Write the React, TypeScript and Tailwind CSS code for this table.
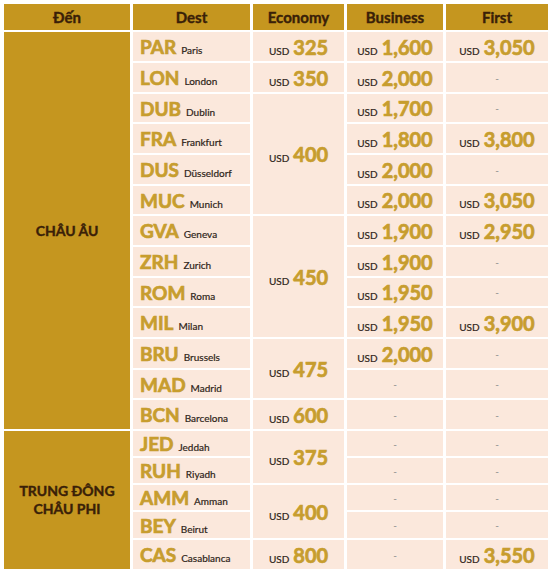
import React from "react";

type Price = string | null;

const rows: { code: string; city: string; biz: Price; first: Price }[] = [
  { code: "PAR", city: "Paris", biz: "1,600", first: "3,050" },
  { code: "LON", city: "London", biz: "2,000", first: null },
  { code: "DUB", city: "Dublin", biz: "1,700", first: null },
  { code: "FRA", city: "Frankfurt", biz: "1,800", first: "3,800" },
  { code: "DUS", city: "Düsseldorf", biz: "2,000", first: null },
  { code: "MUC", city: "Munich", biz: "2,000", first: "3,050" },
  { code: "GVA", city: "Geneva", biz: "1,900", first: "2,950" },
  { code: "ZRH", city: "Zurich", biz: "1,900", first: null },
  { code: "ROM", city: "Roma", biz: "1,950", first: null },
  { code: "MIL", city: "Milan", biz: "1,950", first: "3,900" },
  { code: "BRU", city: "Brussels", biz: "2,000", first: null },
  { code: "MAD", city: "Madrid", biz: null, first: null },
  { code: "BCN", city: "Barcelona", biz: null, first: null },
  { code: "JED", city: "Jeddah", biz: null, first: null },
  { code: "RUH", city: "Riyadh", biz: null, first: null },
  { code: "AMM", city: "Amman", biz: null, first: null },
  { code: "BEY", city: "Beirut", biz: null, first: null },
  { code: "CAS", city: "Casablanca", biz: null, first: "3,550" },
];

// economy: start row index -> [span, price]
const economy: Record<number, [number, string]> = {
  0: [1, "325"],
  1: [1, "350"],
  2: [4, "400"],
  6: [4, "450"],
  10: [2, "475"],
  12: [1, "600"],
  13: [2, "375"],
  15: [2, "400"],
  17: [1, "800"],
};

const spanClass: Record<number, string> = {
  1: "",
  2: "row-span-2",
  4: "row-span-4",
  5: "row-span-5",
  13: "row-span-13",
};

const font = { fontFamily: "Lato, 'Open Sans', sans-serif" };

function PriceCell({ value, span = 1 }: { value: Price; span?: number }) {
  return (
    <div className={`${spanClass[span]} bg-[#fbe8dc] flex items-center justify-center`}>
      {value ? (
        <span className="flex items-baseline gap-[4px] leading-none">
          <span className="text-[10px] text-[#2e2418] [-webkit-text-stroke:0.2px_#2e2418]">USD</span>
          <span className="text-[20px] font-bold text-[#c79d2e] [-webkit-text-stroke:0.7px_#c79d2e]">
            {value}
          </span>
        </span>
      ) : (
        <span className="text-[10px] text-[#8a8a8a] leading-none">-</span>
      )}
    </div>
  );
}

export default function App() {
  const cells: React.ReactNode[] = [];
  rows.forEach((r, i) => {
    if (i === 0) {
      cells.push(
        <div
          key="eu"
          className="row-span-13 bg-[#c5961f] flex items-center justify-center text-[14px] font-bold text-[#3a1f08] [-webkit-text-stroke:0.4px_#3a1f08]"
        >
          CHÂU ÂU
        </div>
      );
    }
    if (i === 13) {
      cells.push(
        <div
          key="me"
          className="row-span-5 bg-[#c5961f] flex items-center justify-center text-center text-[14px] font-bold leading-[18px] text-[#3a1f08] [-webkit-text-stroke:0.4px_#3a1f08]"
        >
          TRUNG ĐÔNG
          <br />
          CHÂU PHI
        </div>
      );
    }
    cells.push(
      <div key={`d${i}`} className="bg-[#fbe8dc] flex items-center pl-[7px]">
        <span className="flex items-baseline gap-[5px] leading-none">
          <span className="text-[19px] font-bold text-[#c79d2e] [-webkit-text-stroke:0.7px_#c79d2e]">
            {r.code}
          </span>
          <span className="text-[10px] text-[#2e2418] [-webkit-text-stroke:0.2px_#2e2418]">{r.city}</span>
        </span>
      </div>
    );
    const e = economy[i];
    if (e) cells.push(<PriceCell key={`e${i}`} value={e[1]} span={e[0]} />);
    cells.push(<PriceCell key={`b${i}`} value={r.biz} />);
    cells.push(<PriceCell key={`f${i}`} value={r.first} />);
  });

  const headers = ["Đến", "Dest", "Economy", "Business", "First"];

  return (
    <div className="w-[555px] h-[577px] bg-white pt-[4px] pl-[4px]" style={font}>
      <div className="grid grid-cols-[126px_117px_91px_96px_102px] grid-rows-[26px_29px_29px_28px_29px_29px_28px_29px_29px_28px_29px_29px_28px_29px_25px_25px_25px_26px_29px] gap-x-[3px] gap-y-[2px] w-fit">
        {headers.map((h) => (
          <div
            key={h}
            className="bg-[#c5961f] flex items-center justify-center text-[15px] font-bold text-[#3a1f08] [-webkit-text-stroke:0.4px_#3a1f08]"
          >
            {h}
          </div>
        ))}
        {cells}
      </div>
    </div>
  );
}
